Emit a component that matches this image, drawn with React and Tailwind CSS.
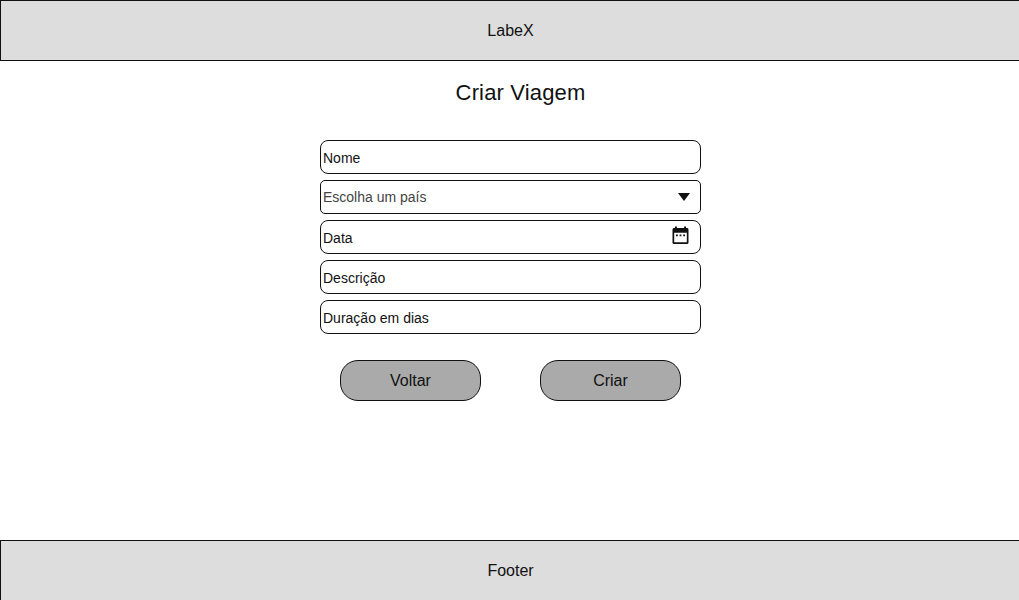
function Field({ children }) {
  return (
    <div className="flex h-[34px] items-center justify-between rounded-[8px] border border-[#111] bg-white pl-[2px] pr-[11px]">
      {children}
    </div>
  );
}

function CalendarIcon() {
  return (
    <svg width="17" height="18" viewBox="0 0 17 18" className="-mt-[4px]" fill="#111">
      <path
        fillRule="evenodd"
        d="M3 .4h1.900v1.600h7.200V.4H14v1.600h.8c1 0 1.700.7 1.700 1.700v12.700c0 1-.7 1.700-1.700 1.700H2.200c-1 0-1.700-.7-1.700-1.700V3.700c0-1 .7-1.700 1.700-1.700H3V.4ZM2.200 6.800v9.400h12.600V6.800H2.200Z"
      />
      <path d="M4 8.500h1.800v1.700H4ZM7.600 8.500h1.800v1.700H7.600ZM11.200 8.500H13v1.700h-1.800Z" />
    </svg>
  );
}

function Button({ children }) {
  return (
    <button className="h-[41px] w-[141px] rounded-[18px] border border-[#111] bg-[#aaa] pt-px text-base">
      {children}
    </button>
  );
}

export default function App() {
  return (
    <div className="h-[600px] w-full overflow-hidden bg-white font-['Liberation_Sans',Arial,sans-serif] text-[#111]">
      <div className="flex h-[601px] w-[1021px] flex-col">
        <header className="flex h-[61px] shrink-0 items-center justify-center border border-[#111] bg-[#ddd] pt-px text-base">
          LabeX
        </header>
        <main className="flex h-[479px] shrink-0 flex-col items-center">
          <h1 className="mt-[15px] h-[33px] pl-[20px] text-[22px] leading-[33px] tracking-[0.15px]">
            Criar Viagem
          </h1>
          <form className="mt-[31px] flex w-[381px] flex-col gap-[6px] text-sm">
            <Field>
              <span className="mt-px">Nome</span>
            </Field>
            <div className="flex h-[34px] items-center justify-between rounded-[5px] border border-[#111] bg-white pl-[2px] pr-[10px]">
              <span className="text-[#444]">Escolha um país</span>
              <svg width="12" height="8" viewBox="0 0 12 8" fill="#111">
                <path d="M0 0h12L6 8Z" />
              </svg>
            </div>
            <Field>
              <span className="mt-px">Data</span>
              <CalendarIcon />
            </Field>
            <Field>
              <span className="mt-px">Descrição</span>
            </Field>
            <Field>
              <span className="mt-px">Duração em dias</span>
            </Field>
          </form>
          <div className="mt-[26px] flex gap-[59px]">
            <Button>Voltar</Button>
            <Button>Criar</Button>
          </div>
        </main>
        <footer className="flex h-[61px] shrink-0 items-center justify-center border border-[#111] bg-[#ddd] pt-px text-base">
          Footer
        </footer>
      </div>
    </div>
  );
}
